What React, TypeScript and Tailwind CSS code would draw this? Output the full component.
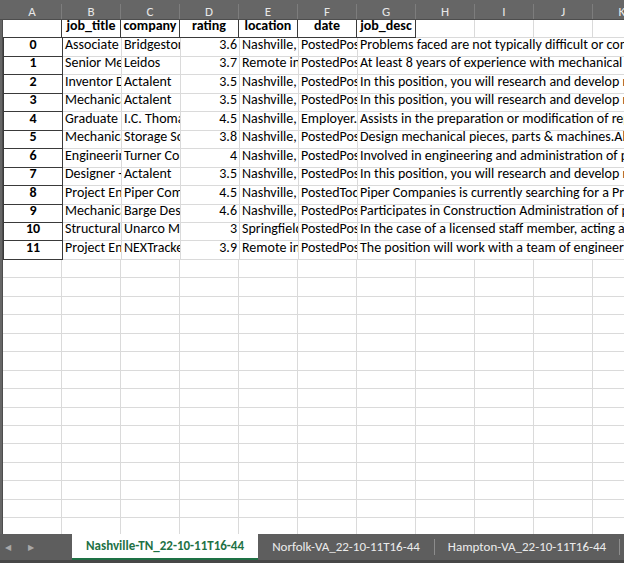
import React from 'react';

const COLS = ['A', 'B', 'C', 'D', 'E', 'F', 'G', 'H', 'I', 'J', 'K'];
const HEADERS = ['job_title', 'company', 'rating', 'location', 'date', 'job_desc'];

const ROWS: [string, string, string, string, string, string][] = [
  ['Associate Engineer', 'Bridgestone Americas', '3.6', 'Nashville, TN', 'PostedPosted 30+ days ago', 'Problems faced are not typically difficult or complex and can be solved'],
  ['Senior Mechanical Engineer', 'Leidos', '3.7', 'Remote in Nashville, TN', 'PostedPosted 5 days ago', 'At least 8 years of experience with mechanical design and analysis'],
  ['Inventor Designer', 'Actalent', '3.5', 'Nashville, TN', 'PostedPosted 12 days ago', 'In this position, you will research and develop new products'],
  ['Mechanical Engineer', 'Actalent', '3.5', 'Nashville, TN', 'PostedPosted 12 days ago', 'In this position, you will research and develop new products'],
  ['Graduate Engineer', 'I.C. Thomasson', '4.5', 'Nashville, TN', 'Employer.Active 3 days ago', 'Assists in the preparation or modification of reports and drawings'],
  ['Mechanical Designer', 'Storage Solutions', '3.8', 'Nashville, TN', 'PostedPosted 8 days ago', 'Design mechanical pieces, parts & machines.Able to read drawings'],
  ['Engineering Manager', 'Turner Construction', '4', 'Nashville, TN', 'PostedPosted 30+ days ago', 'Involved in engineering and administration of projects'],
  ['Designer - Mechanical', 'Actalent', '3.5', 'Nashville, TN', 'PostedPosted 12 days ago', 'In this position, you will research and develop new products'],
  ['Project Engineer', 'Piper Companies', '4.5', 'Nashville, TN', 'PostedToday', 'Piper Companies is currently searching for a Project Engineer'],
  ['Mechanical Engineer', 'Barge Design Solutions', '4.6', 'Nashville, TN', 'PostedPosted 21 days ago', 'Participates in Construction Administration of projects'],
  ['Structural, Engineer', 'Unarco Material Handling', '3', 'Springfield, TN', 'PostedPosted 30+ days ago', 'In the case of a licensed staff member, acting as engineer of record'],
  ['Project Engineer', 'NEXTracker', '3.9', 'Remote in Nashville, TN', 'PostedPosted 2 days ago', 'The position will work with a team of engineers and designers'],
];

const EMPTY_ROWS = 17;

const font = "font-['Calibri','Lato',sans-serif]";

type CellProps = { children?: React.ReactNode; className?: string; dark?: boolean };

function Cell({ children, className = '', dark = false }: CellProps) {
  const border = dark ? 'border border-[#3a3a3a] -ml-px -mt-px h-[calc(100%+1px)] w-[60px]' : 'border-b border-r border-[#dadada] h-full w-[59px]';
  return (
    <div className={`shrink-0 overflow-hidden whitespace-nowrap px-[2px] flex items-end pb-[1px] ${border} ${className}`}>
      {children}
    </div>
  );
}

function ColumnHeaders() {
  return (
    <div className="flex h-[20px] shrink-0 bg-[#666666] pt-[4px] border-b border-[#4d4d4d]">
      <div className="w-[3px] shrink-0" />
      {COLS.map((c) => (
        <div
          key={c}
          className="w-[59px] shrink-0 border-r border-[#7d7d7d] flex items-center justify-center text-[13px] text-[#e8e8e8]"
        >
          {c}
        </div>
      ))}
    </div>
  );
}

function HeaderRow() {
  return (
    <div className="flex h-[18.46px] shrink-0 items-end">
      <Cell />
      {HEADERS.map((h) => (
        <Cell key={h} dark className="font-bold justify-center">
          {h}
        </Cell>
      ))}
      {['H', 'I', 'J', 'K'].map((c) => (
        <Cell key={c} />
      ))}
    </div>
  );
}

function DataRow({ idx, row }: { idx: number; row: (typeof ROWS)[number] }) {
  const [title, company, rating, location, date, desc] = row;
  return (
    <div className="flex h-[18.46px] shrink-0 items-end">
      <Cell dark className="font-bold justify-center ml-0 w-[59px]">{idx}</Cell>
      <Cell>{title}</Cell>
      <Cell>{company}</Cell>
      <Cell className="justify-end">{rating}</Cell>
      <Cell>{location}</Cell>
      <Cell>{date}</Cell>
      <div className="h-full flex-1 min-w-0 overflow-hidden whitespace-nowrap border-b border-[#dadada] px-[2px] flex items-end pb-[1px]">
        {desc}
      </div>
    </div>
  );
}

function EmptyRow() {
  return (
    <div className="flex h-[18.46px] shrink-0">
      {COLS.map((c) => (
        <Cell key={c} />
      ))}
    </div>
  );
}

function SheetTabs() {
  return (
    <div className="flex h-[29px] shrink-0 bg-[#5e5e5e] border-b-[3px] border-[#474747] text-[13px]">
      <div className="w-[72px] shrink-0 flex items-center gap-[17px] pl-[5px] text-[8px] text-[#a8a8a8]">
        <span>◀</span>
        <span>▶</span>
      </div>
      <div className="w-[186px] shrink-0 bg-white flex items-center justify-center font-bold text-[#1e7145] border-b-2 border-[#1e7145]">
        Nashville-TN_22-10-11T16-44
      </div>
      <div className="w-[177px] shrink-0 flex items-center justify-center text-[#ececec] border-r border-[#8c8c8c] my-[5px]">
        Norfolk-VA_22-10-11T16-44
      </div>
      <div className="w-[185px] shrink-0 flex items-center justify-center text-[#ececec] border-r border-[#8c8c8c] my-[5px]">
        Hampton-VA_22-10-11T16-44
      </div>
    </div>
  );
}

export default function App() {
  return (
    <div className={`w-[624px] h-[563px] overflow-hidden flex flex-col bg-white text-[14px] text-black ${font}`}>
      <ColumnHeaders />
      <div className="flex flex-1 min-h-0 overflow-hidden">
        <div className="w-[3px] shrink-0 bg-[#666666] border-r border-[#4d4d4d]" />
        <div className="flex-1 min-w-0 flex flex-col overflow-hidden">
          <HeaderRow />
          {ROWS.map((r, i) => (
            <DataRow key={i} idx={i} row={r} />
          ))}
          {Array.from({ length: EMPTY_ROWS }).map((_, i) => (
            <EmptyRow key={i} />
          ))}
        </div>
      </div>
      <SheetTabs />
    </div>
  );
}
